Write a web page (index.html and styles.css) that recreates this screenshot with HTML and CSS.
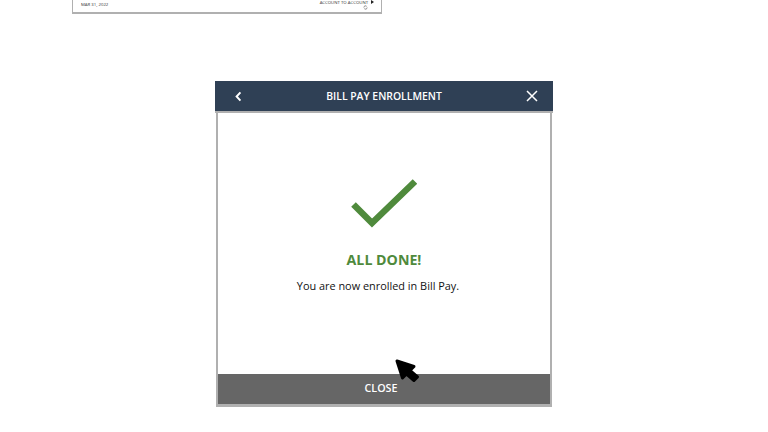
FILE: index.html
```html
<!DOCTYPE html>
<html lang="en">
<head>
<meta charset="utf-8">
<title>Bill Pay Enrollment</title>
<link rel="stylesheet" href="styles.css">
</head>
<body>
<section class="card">
  <span class="date">MAR 31, 2022</span>
  <div class="transfer">
    <div class="transfer-row"><span>ACCOUNT TO ACCOUNT</span><span class="caret"></span></div>
    <svg class="repeat" viewBox="0 0 6 6" aria-hidden="true"><path d="M1 3a2 2 0 0 1 3.4-1.4M5 3a2 2 0 0 1-3.4 1.4" fill="none" stroke="#555" stroke-width=".8"/></svg>
  </div>
</section>
<section class="modal">
  <header class="modal-head">
    <svg class="back" viewBox="0 0 8 12" aria-hidden="true"><path d="M6.2 1.2 1.8 6l4.4 4.800" fill="none" stroke="#fff" stroke-width="2.200"/></svg>
    <h1 class="title">BILL PAY ENROLLMENT</h1>
    <svg class="close-x" viewBox="0 0 12 12" aria-hidden="true"><path d="M1 1l10 10M11 1 1 11" fill="none" stroke="#fff" stroke-width="1.500"/></svg>
  </header>
  <div class="modal-body">
    <svg class="check" viewBox="0 0 66 50" aria-hidden="true"><path d="M2.500 25.500 21 44 64 2.500" fill="none" stroke="#4f8a3c" stroke-width="6.500"/></svg>
    <h2 class="done">ALL DONE!</h2>
    <p class="message">You are now enrolled in Bill Pay.</p>
  </div>
  <button class="close-btn" type="button">CLOSE</button>
  <svg class="cursor" viewBox="0 0 26 26" aria-hidden="true"><path d="M2 2 19 7.500 15 11.500 22.500 18 19 21.500 11.500 15 7.500 19Z" fill="#000" stroke="#000" stroke-width="3" stroke-linejoin="round"/></svg>
</section>
</body>
</html>
```
FILE: styles.css
```css
* { box-sizing: border-box; }
html, body { margin: 0; padding: 0; background: #fff; }
body { width: 768px; height: 432px; overflow: hidden; font-family: "Open Sans", "Liberation Sans", sans-serif; }

.card {
  width: 310px; height: 14px; margin-left: 72px;
  padding: 0 7px 0 8px;
  border: 1px solid #b0b0b0; border-top: 0; border-bottom-width: 2px;
  display: flex; justify-content: space-between; align-items: flex-start;
  font-size: 4.300px; line-height: 6px; color: #333;
}
.date { margin-top: 1px; }
.transfer { display: flex; flex-direction: column; align-items: flex-end; }
.transfer-row { display: flex; align-items: center; gap: 3px; margin-top: -1px; }
.caret { width: 0; height: 0; border-left: 3px solid #222; border-top: 2px solid transparent; border-bottom: 2px solid transparent; }
.repeat { width: 5px; height: 5px; margin-right: 6px; }

.modal {
  position: relative;
  width: 336px; height: 326px; margin: 67px 0 0 216px;
  display: flex; flex-direction: column;
  border: 2px solid #b0b0b0; border-top: 0; border-bottom-width: 3px;
  background: #fff;
}
.modal-head {
  height: 32px; margin: 0 -3px;
  display: flex; align-items: center; justify-content: space-between;
  padding: 0 15px 0 20px;
  background: #2f4055; border-bottom: 2px solid #b0b0b0; color: #fff;
}
.back { width: 7px; height: 11px; }
.close-x { width: 12px; height: 12px; }
.title { margin: 0; font-size: 10.400px; font-weight: 600; line-height: 30px; color: #fff; }
.modal-body { flex: 1; display: flex; flex-direction: column; align-items: center; padding-top: 66px; }
.check { width: 66px; height: 50px; }
.done { margin: 20px 0 0 0; font-size: 14.200px; line-height: 21px; font-weight: 700; color: #4f8a3c; }
.message { margin: 6px 12px 0 0; font-size: 10.900px; line-height: 20px; color: #111; }
.close-btn {
  height: 30px; margin: 0; border: 0; padding: 0 6px 1px 0;
  background: #666; color: #fff;
  font: 600 10.700px/1 "Open Sans", "Liberation Sans", sans-serif;
}
.cursor { position: absolute; left: 177px; top: 278px; width: 26px; height: 26px; }
```
